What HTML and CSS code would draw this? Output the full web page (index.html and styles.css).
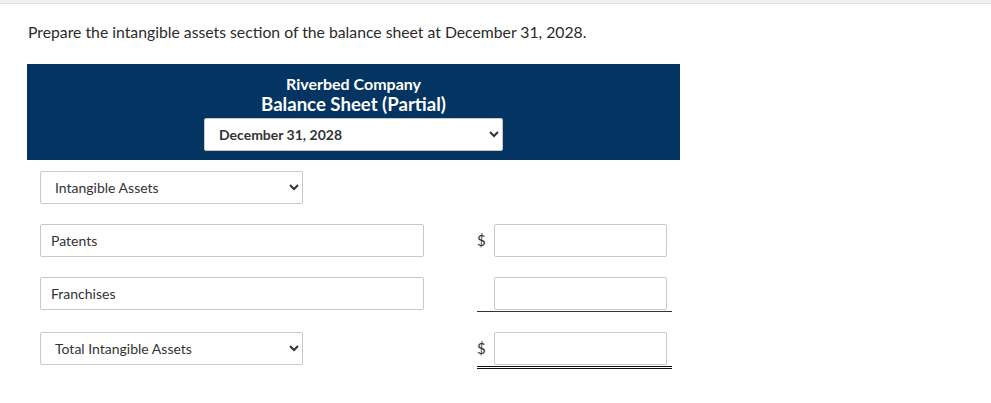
FILE: index.html
```html
<!DOCTYPE html>
<html>
<head>
<meta charset="utf-8">
<link rel="stylesheet" href="styles.css">
</head>
<body>
<div class="topbar"></div>
<main class="content">
  <p class="prompt">Prepare the intangible assets section of the balance sheet at December 31, 2028.</p>
  <section class="sheet">
    <header class="sheet-head">
      <div class="company">Riverbed Company</div>
      <div class="title">Balance Sheet (Partial)</div>
      <select class="date-select"><option>December 31, 2028</option></select>
    </header>
    <div class="rows">
      <div class="row row-heading">
        <select class="label-select"><option>Intangible Assets</option></select>
      </div>
      <div class="row">
        <input class="label-input" type="text" value="Patents">
        <div class="amount">
          <span class="dollar">$</span>
          <input class="amount-input" type="text">
        </div>
      </div>
      <div class="row">
        <input class="label-input" type="text" value="Franchises">
        <div class="amount single">
          <span class="dollar"></span>
          <input class="amount-input" type="text">
        </div>
      </div>
      <div class="row row-total">
        <select class="label-select"><option>Total Intangible Assets</option></select>
        <div class="amount double">
          <span class="dollar">$</span>
          <input class="amount-input" type="text">
        </div>
      </div>
    </div>
  </section>
</main>
</body>
</html>
```
FILE: styles.css
```css
html, body {
  margin: 0;
  padding: 0;
  background: #fff;
}
body {
  font-family: Lato, "Liberation Sans", sans-serif;
  color: #333;
}
.topbar {
  height: 3px;
  background: #f0f0f0;
  border-bottom: 1px solid #e2e2e2;
}
.content {
  padding: 0 0 0 27px;
}
.prompt {
  margin: 18px 0 0 1px;
  font-size: 15.75px;
  line-height: 20px;
  color: #2b2b2b;
}
.sheet {
  margin-top: 22px;
  width: 653px;
}
.sheet-head {
  background: #033462;
  color: #fff;
  display: flex;
  flex-direction: column;
  align-items: center;
  padding: 9px 0 9px;
}
.company {
  font-weight: bold;
  font-size: 16px;
  line-height: 21px;
}
.title {
  font-weight: bold;
  font-size: 18.6px;
  line-height: 21px;
}
select, input {
  font-family: Lato, "Liberation Sans", sans-serif;
  box-sizing: border-box;
  height: 33px;
  border: 1px solid #c8c8c8;
  border-radius: 2px;
  background: #fff;
  color: #333;
  font-size: 14px;
  margin: 0;
  outline: none;
}
.date-select {
  margin-top: 3px;
  width: 299px;
  font-weight: bold;
  padding: 0 0 0 10px;
  color: #333;
}
.rows {
  padding-left: 13px;
}
.row {
  display: grid;
  grid-template-columns: 384px 53px 195px;
  align-items: start;
  margin-top: 20px;
}
.row-heading {
  margin-top: 11px;
}
.row-total {
  margin-top: 20px;
}
.label-select {
  grid-column: 1;
  width: 263px;
  padding: 0 0 0 10px;
}
.label-input {
  grid-column: 1;
  width: 384px;
  padding: 0 10px;
}
.amount {
  grid-column: 3;
  width: 195px;
  display: flex;
  align-items: center;
  box-sizing: border-box;
  padding-right: 5px;
}
.amount.single {
  padding-bottom: 1px;
  border-bottom: 1px solid #333;
}
.amount.double {
  padding-bottom: 1px;
  border-bottom: 3px double #111;
}
.dollar {
  width: 17px;
  font-size: 15px;
  color: #333;
  line-height: 33px;
  align-self: flex-start;
}
.amount-input {
  width: 173px;
}
```
